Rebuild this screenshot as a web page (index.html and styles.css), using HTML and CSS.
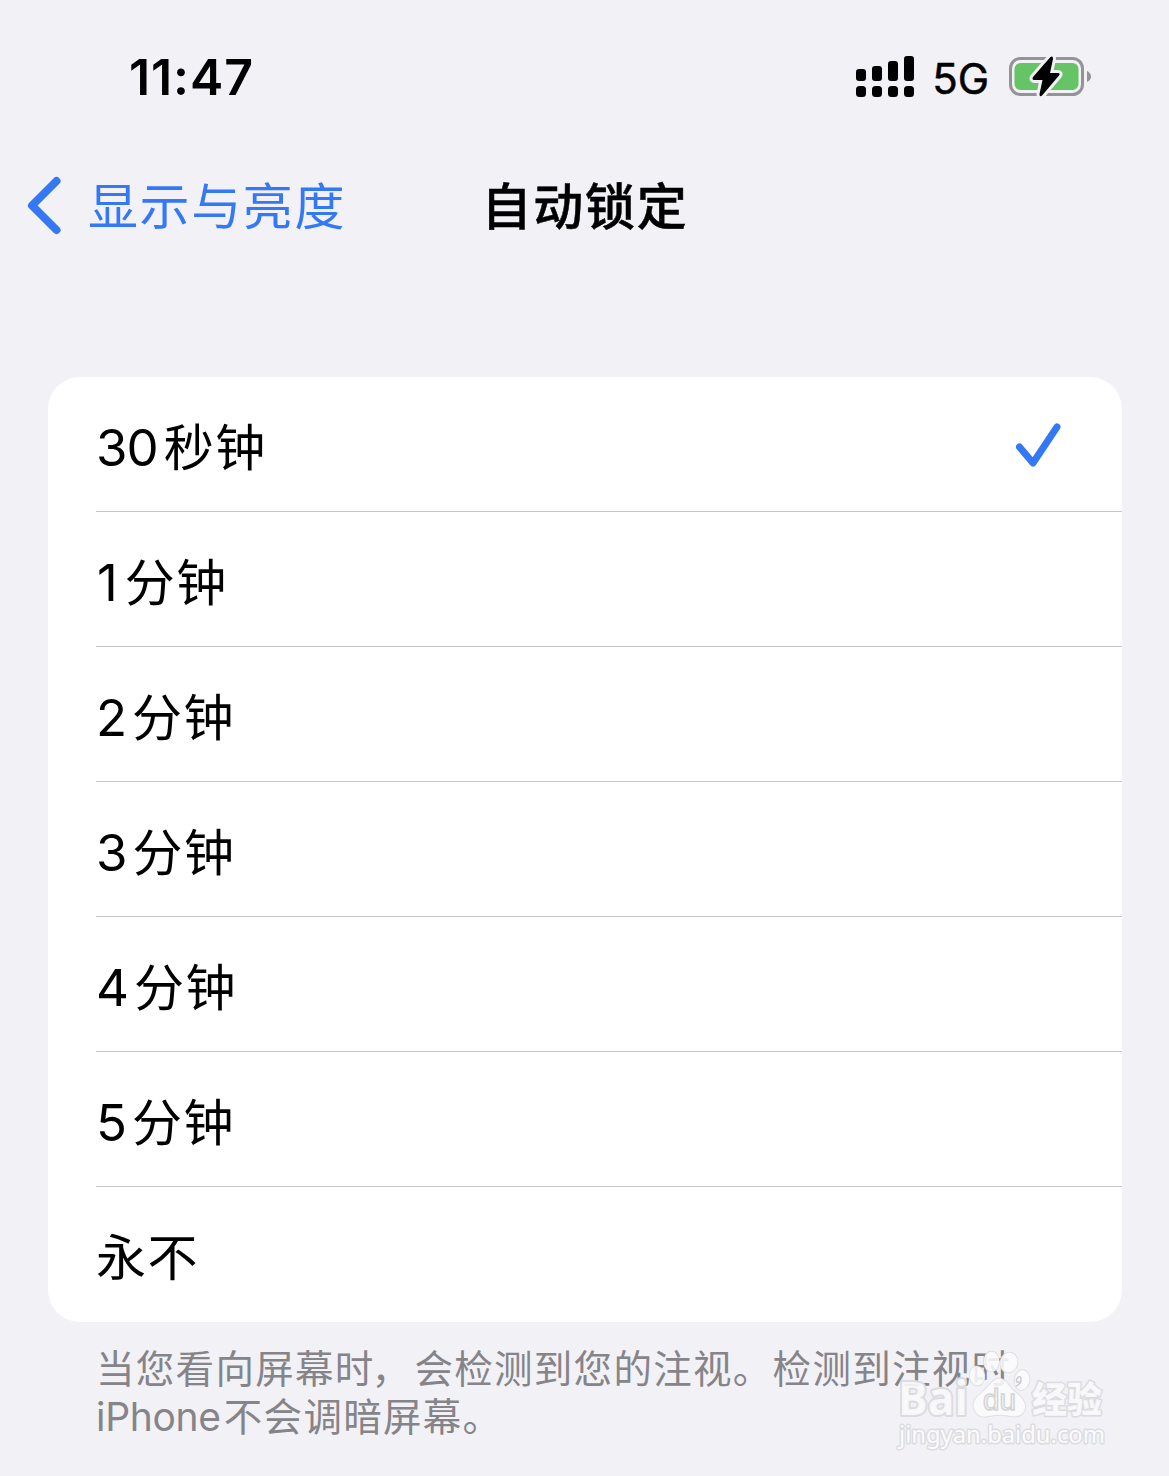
FILE: index.html
```html
<!DOCTYPE html>
<html lang="zh-CN">
<head>
<meta charset="utf-8">
<title>自动锁定</title>
<link rel="stylesheet" href="styles.css">
</head>
<body>
<div class="screen">
  <header class="status">
    <div class="time">11:47</div>
    <div class="indicators">
      <svg class="signal" width="60" height="42" viewBox="0 0 60 42">
        <rect x="1" y="13" width="10" height="12" rx="3"/><rect x="17" y="10" width="10" height="15" rx="3"/><rect x="33" y="5" width="10" height="20" rx="3"/><rect x="49" y="0" width="10" height="25" rx="3"/>
        <rect x="1" y="30" width="10" height="11" rx="3.5"/><rect x="17" y="30" width="10" height="11" rx="3.5"/><rect x="33" y="30" width="10" height="11" rx="3.5"/><rect x="49" y="30" width="10" height="11" rx="3.5"/>
      </svg>
      <span class="network">5G</span>
      <svg class="battery" width="84" height="42" viewBox="0 0 84 42">
        <rect x="2.5" y="2.5" width="72" height="36" rx="10" fill="none" stroke="#949398" stroke-width="3"/>
        <path d="M79 15Q83 17 83 20.500T79 26Z" fill="#949398"/>
        <rect x="6.500" y="7" width="64" height="27" rx="6" fill="#65c466"/>
        <path d="M42 1.500 25 21Q23.500 24 26.500 24H34.500L31.500 38Q31.500 42 34.500 39L51 19.500Q52.500 17 50 17H42L45 3Q45 -1 42 1.500Z" fill="#000" stroke="#f2f1f6" stroke-width="6" paint-order="stroke" stroke-linejoin="round"/>
      </svg>
    </div>
  </header>
  <nav class="nav">
    <div class="back">
      <svg width="36" height="60" viewBox="0 0 36 60"><path d="M29.500 6 5 30.500 29.500 55" transform="translate(0 -1)" fill="none" stroke="#3478f6" stroke-width="8" stroke-linecap="round" stroke-linejoin="round"/></svg>
      <span class="label">显示与亮度</span>
    </div>
    <h1 class="title">自动锁定</h1>
  </nav>
  <main>
    <ul class="list">
      <li class="row"><span class="num">30</span><span>秒钟</span>
        <svg class="check" width="48" height="48" viewBox="0 0 48 48"><path d="M5.500 25 19 41 43 5" fill="none" stroke="#3478f6" stroke-width="7" stroke-linecap="round" stroke-linejoin="round"/></svg></li>
      <li class="row"><span class="num one">1</span><span>分钟</span></li>
      <li class="row"><span class="num">2</span><span>分钟</span></li>
      <li class="row"><span class="num">3</span><span>分钟</span></li>
      <li class="row"><span class="num">4</span><span>分钟</span></li>
      <li class="row"><span class="num">5</span><span>分钟</span></li>
      <li class="row"><span>永不</span></li>
    </ul>
    <p class="note">当您看向屏幕时<span class="comma">，</span>会检测到您的注视。检测到注视时<br><span class="latin">iPhone</span>不会调暗屏幕。</p>
  </main>
  <svg class="watermark" width="230" height="110" viewBox="0 0 230 110">
    <g class="mark">
      <ellipse cx="87" cy="31" rx="7.500" ry="9.500" transform="rotate(-8 87 31)"/>
      <ellipse cx="101.500" cy="16.500" rx="7.500" ry="10"/>
      <ellipse cx="119" cy="17.500" rx="8.500" ry="10" transform="rotate(12 119 17.500)"/>
      <ellipse cx="132" cy="35" rx="7.500" ry="10" transform="rotate(8 132 35)"/>
      <path d="M101 38Q109 29 117 38Q121 44 129 50Q139 60 133 68Q129 73 120 71Q109 69 100 71Q89 74 85 66Q80 57 90 49Q96 44 101 38Z"/>
      <text class="bai" x="8" y="69.500" textLength="70" lengthAdjust="spacingAndGlyphs">Bai</text>
      <text class="jing" x="142" y="68" textLength="70" lengthAdjust="spacingAndGlyphs">经验</text>
      <text class="site" x="9" y="98" textLength="206" lengthAdjust="spacingAndGlyphs">jingyan.baidu.com</text>
    </g>
    <text class="du" x="93" y="65" textLength="33" lengthAdjust="spacingAndGlyphs">du</text>
    <path class="curl" d="M129 32Q125 34 127 37Q131 38 131 34Q131 31 128 32M131 35Q131 39 126 41"/>
  </svg>
</div>
</body>
</html>
```
FILE: styles.css
```css
* { box-sizing: border-box; }
body { margin: 0; background: #f2f1f6; font-family: Inter, "Noto Sans CJK SC", sans-serif; color: #000; }
.screen { position: relative; width: 1169px; height: 1476px; overflow: hidden; }
.status { height: 154px; padding: 0 77px 0 129px; display: flex; justify-content: space-between; align-items: center; }
.time { font-size: 50px; font-weight: 600; line-height: 60px; letter-spacing: .9px; }
.indicators { display: flex; align-items: center; }
.network { font-size: 42px; line-height: 50px; margin: 3px 19px 0 17px; -webkit-text-stroke: .5px #000; }
.nav { height: 104px; display: grid; grid-template-columns: 1fr auto 1fr; align-items: center; font-size: 50px; letter-spacing: 1.6px; line-height: 60px; }
.back { display: flex; align-items: center; gap: 25px; padding-left: 27px; color: #3478f6; white-space: nowrap; }
.label { padding-top: 2px; }
.title { margin: 0; padding: 2px 0 0 1px; font-size: 50px; font-weight: 500; letter-spacing: 1.7px; -webkit-text-stroke: .5px #000; }
.list { list-style: none; margin: 119px 47px 0 48px; padding: 0; background: #fff; border-radius: 32px; }
.row { height: 135px; margin-left: 48px; padding-top: 7px; display: flex; align-items: center; font-size: 50px; letter-spacing: 1.5px; line-height: 60px; border-bottom: 1px solid #c6c6c8; }
.row:last-child { border-bottom: 0; }
.num { margin-right: 6px; font-size: 51px; letter-spacing: -1px; }
.one { margin-right: 8px; padding-left: 1px; }
.check { margin: -3px 60px 0 auto; }
.note { margin: 23px 0 0 96px; font-size: 38.5px; letter-spacing: 1.3px; line-height: 48px; color: #858489; white-space: nowrap; }
.latin { font-size: 39px; letter-spacing: -.3px; margin-right: 3px; }
.comma { position: relative; left: -3px; }
.watermark { position: absolute; left: 890px; top: 1345px; }
.mark { fill: #fbfbfc; fill-opacity: .88; stroke: #dcdce0; stroke-width: 1.5px; paint-order: stroke; stroke-linejoin: round; }
.bai { font: 700 46px "Open Sans", sans-serif; stroke-width: 4px; }
.jing { font: 900 36px "Noto Sans CJK SC", sans-serif; stroke-width: 3px; }
.site { font: 400 24px "Noto Sans", sans-serif; fill-opacity: 1; stroke-width: 3px; }
.du { font: 400 30px "Liberation Sans", sans-serif; fill: #f8f8fa; stroke: #d4d4d8; stroke-width: 1.5px; }
.curl { fill: none; stroke: #ccccd0; stroke-width: 1.5px; }
```
